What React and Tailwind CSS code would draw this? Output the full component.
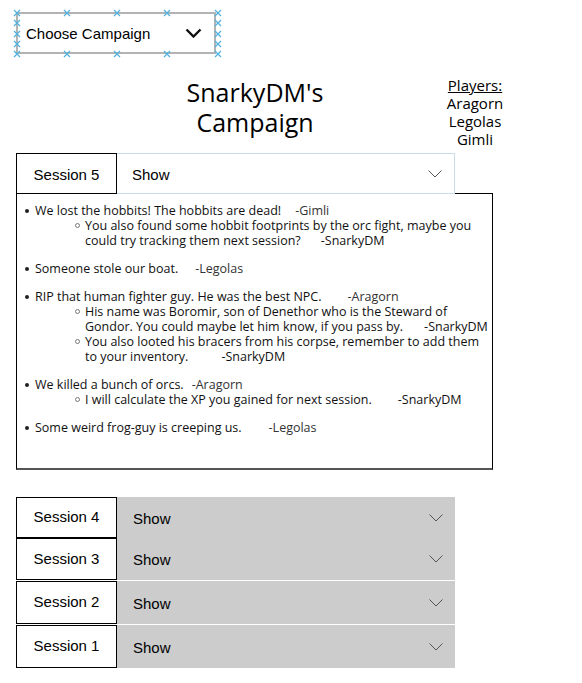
import React from "react";

const notes = [
  {
    text: "We lost the hobbits! The hobbits are dead!",
    by: "-Gimli",
    gap: 14,
    replies: [
      {
        lines: ["You also found some hobbit footprints by the orc fight, maybe you", "could try tracking them next session?"],
        by: "-SnarkyDM",
        gap: 20,
      },
    ],
  },
  { text: "Someone stole our boat.", by: "-Legolas", gap: 17, replies: [] },
  {
    text: "RIP that human fighter guy. He was the best NPC.",
    by: "-Aragorn",
    gap: 26,
    replies: [
      {
        lines: ["His name was Boromir, son of Denethor who is the Steward of", "Gondor. You could maybe let him know, if you pass by."],
        by: "-SnarkyDM",
        gap: 21,
      },
      {
        lines: ["You also looted his bracers from his corpse, remember to add them", "to your inventory."],
        by: "-SnarkyDM",
        gap: 33,
      },
    ],
  },
  {
    text: "We killed a bunch of orcs.",
    by: "-Aragorn",
    gap: 8,
    replies: [{ lines: ["I will calculate the XP you gained for next session."], by: "-SnarkyDM", gap: 26 }],
  },
  { text: "Some weird frog-guy is creeping us.", by: "-Legolas", gap: 27, replies: [] },
];

const olderSessions = [
  { name: "Session 4", h: "h-[41px]", gapTop: "" },
  { name: "Session 3", h: "h-[42px]", gapTop: "" },
  { name: "Session 2", h: "h-[43px]", gapTop: "mt-[1px]" },
  { name: "Session 1", h: "h-[43px]", gapTop: "mt-[1px]" },
];

function ThinChevron() {
  return (
    <svg width="14" height="8" viewBox="0 0 14 8" className="shrink-0">
      <path d="M0.5 0.5 L7 7 L13.5 0.5" fill="none" stroke="#555" strokeWidth="1" />
    </svg>
  );
}

// selection handle drawn over the picker border
function Handle({ className }) {
  return (
    <svg width="8" height="8" viewBox="0 0 8 8" className={`absolute -translate-x-1/2 -translate-y-1/2 ${className}`}>
      <path d="M1 1 L7 7 M7 1 L1 7" stroke="#52b2df" strokeWidth="1.3" />
    </svg>
  );
}

function CampaignPicker() {
  const xs = ["left-[-1px]", "left-[49px]", "left-[99px]", "left-[149px]", "left-[200px]"];
  const ys = ["top-[9px]", "top-[20px]", "top-[30px]"];
  return (
    <div className="relative mt-[12px] w-[200px] h-[42px] border-2 border-[#b3b3b3] flex items-center justify-between pl-[8px] pr-[12px]">
      <span className="mt-[3px] text-[15px] text-black font-['Liberation_Sans',Arial,sans-serif]">Choose Campaign</span>
      <svg width="17" height="10" viewBox="0 0 17 10">
        <path d="M1.5 1.5 L8.5 8.5 L15.5 1.5" fill="none" stroke="#111" strokeWidth="2.4" />
      </svg>
      {xs.map((x) => (
        <React.Fragment key={x}>
          <Handle className={`${x} top-[-1px]`} />
          <Handle className={`${x} top-[40px]`} />
        </React.Fragment>
      ))}
      {ys.map((y) => (
        <React.Fragment key={y}>
          <Handle className={`${y} left-[-1px]`} />
          <Handle className={`${y} left-[200px]`} />
        </React.Fragment>
      ))}
    </div>
  );
}

function Note({ note, first }) {
  return (
    <li className={first ? "" : "mt-[13px]"}>
      <div className="flex items-center">
        <span className="w-[4px] h-[4px] rounded-full bg-[#222] ml-[8px] mr-[6px] shrink-0" />
        <span>{note.text}</span>
        <span style={{ marginLeft: note.gap }} className="text-[#333]">{note.by}</span>
      </div>
      {note.replies.map((r, i) => (
        <div key={i} className="flex pl-[58px]">
          <span className="w-[5px] h-[5px] rounded-full border border-[#777] mt-[5px] mr-[5px] shrink-0" />
          <div>
            {r.lines.map((line, j) => (
              <div key={j}>
                {line}
                {j === r.lines.length - 1 && <span style={{ marginLeft: r.gap }}>{r.by}</span>}
              </div>
            ))}
          </div>
        </div>
      ))}
    </li>
  );
}

export default function App() {
  return (
    <div className="min-h-screen bg-white pl-[16px] text-black">
      <CampaignPicker />

      <div className="mt-[22px] flex font-['Open_Sans',sans-serif]">
        <h1 className="ml-[101px] w-[276px] text-center text-[25px] leading-[30px] font-normal pt-[1px]">
          SnarkyDM's
          <br />
          Campaign
        </h1>
        <div className="w-[164px] text-center text-[15px] leading-[18px]">
          <div className="underline">Players:</div>
          <div>Aragorn</div>
          <div>Legolas</div>
          <div>Gimli</div>
        </div>
      </div>

      <div className="mt-[5px] flex h-[41px] font-['Liberation_Sans',Arial,sans-serif] text-[15px]">
        <div className="w-[101px] border border-black flex items-center justify-center">
          <span className="mt-[3px]">Session 5</span>
        </div>
        <div className="w-[338px] border border-l-0 border-[#c9dde9] flex items-center justify-between pl-[15px] pr-[12px]">
          <span className="mt-[3px]">Show</span>
          <ThinChevron />
        </div>
        <div className="w-[38px] border-b border-black" />
      </div>
      <div className="w-[477px] h-[276px] border border-t-0 border-black border-b-2 border-b-[#555] pt-[9px] font-['Open_Sans',sans-serif] text-[12.5px] leading-[15px] text-[#111]">
        <ul>
          {notes.map((n, i) => (
            <Note key={i} note={n} first={i === 0} />
          ))}
        </ul>
      </div>

      <div className="mt-[27px] font-['Liberation_Sans',Arial,sans-serif] text-[15px]">
        {olderSessions.map((s) => (
          <div key={s.name} className={`flex ${s.h} ${s.gapTop}`}>
            <div className="w-[101px] border border-black bg-white flex items-center justify-center">{s.name}</div>
            <div className="w-[338px] bg-[#cccccc] flex items-center justify-between pl-[16px] pr-[12px]">
              <span className="mt-[3px]">Show</span>
              <ThinChevron />
            </div>
          </div>
        ))}
      </div>
    </div>
  );
}
